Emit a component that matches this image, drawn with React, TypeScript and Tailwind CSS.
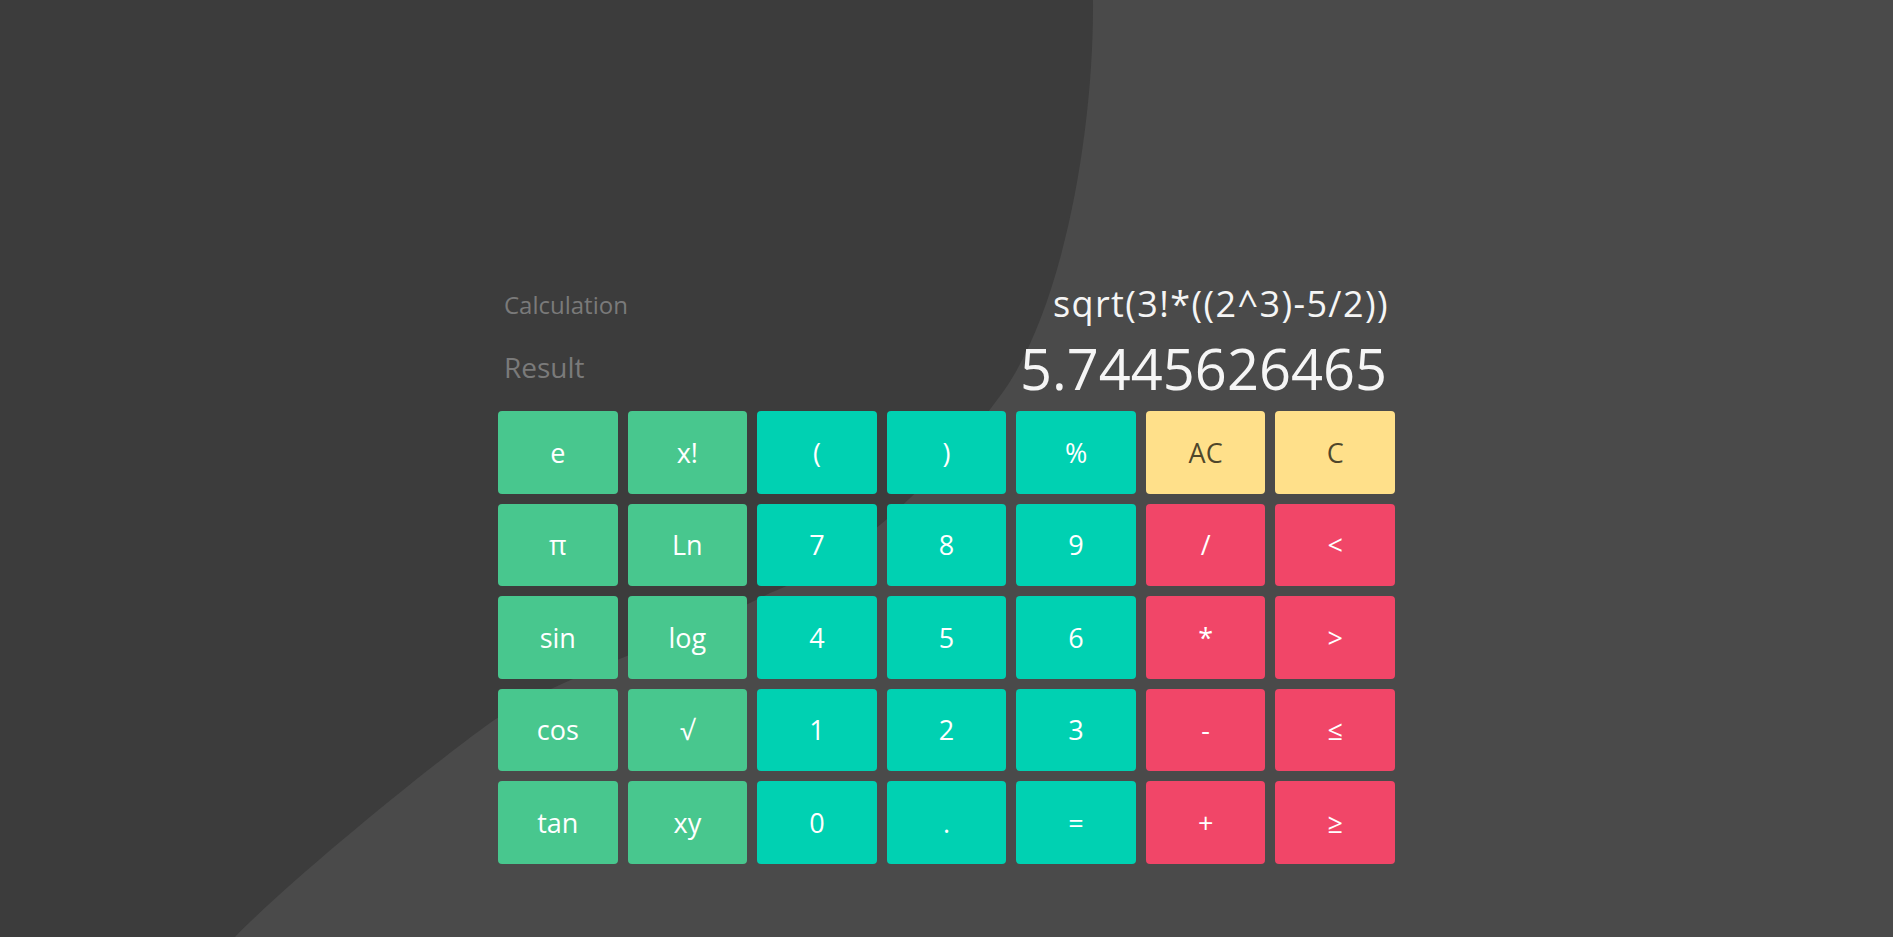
import React from "react";

type Kind = "fn" | "num" | "warn" | "op";

const rows: [string, Kind][][] = [
  [["e", "fn"], ["x!", "fn"], ["(", "num"], [")", "num"], ["%", "num"], ["AC", "warn"], ["C", "warn"]],
  [["π", "fn"], ["Ln", "fn"], ["7", "num"], ["8", "num"], ["9", "num"], ["/", "op"], ["<", "op"]],
  [["sin", "fn"], ["log", "fn"], ["4", "num"], ["5", "num"], ["6", "num"], ["*", "op"], [">", "op"]],
  [["cos", "fn"], ["√", "fn"], ["1", "num"], ["2", "num"], ["3", "num"], ["-", "op"], ["≤", "op"]],
  [["tan", "fn"], ["xy", "fn"], ["0", "num"], [".", "num"], ["=", "num"], ["+", "op"], ["≥", "op"]],
];

const kindClass: Record<Kind, string> = {
  fn: "bg-[#48c78e] text-white",
  num: "bg-[#00d1b2] text-white",
  warn: "bg-[#ffe08a] text-black/70",
  op: "bg-[#f14668] text-white",
};

export default function App() {
  return (
    <div className="relative h-[937px] w-full overflow-hidden bg-[#4a4a4a] font-['Open_Sans','Noto_Sans',sans-serif]">
      <svg
        className="absolute inset-0"
        width="1893"
        height="937"
        viewBox="0 0 1893 937"
        aria-hidden="true"
      >
        <path
          d="M0,0 L1093,0 C1094,140 1060,320 997,400 C965,445 870,555 770,593 C680,640 550,680 490,723 C430,766 290,880 235,937 L0,937 Z"
          fill="#3c3c3c"
        />
      </svg>

      <div className="relative mx-auto w-[897px] pt-[286px]">
        <div className="flex h-[36px] items-start justify-between">
          <span className="mt-[7px] pl-[6px] text-[24px] leading-none text-[#7a7a7a]">Calculation</span>
          <span className="pr-[6px] text-[36px] leading-none tracking-[1.4px] text-[#f5f5f5]">sqrt(3!*((2^3)-5/2))</span>
        </div>
        <div className="mt-[18px] flex h-[56px] items-start justify-between">
          <span className="mt-[13px] pl-[6px] text-[28px] leading-none text-[#7a7a7a]">Result</span>
          <span className="pr-[8px] text-[56px] leading-none text-[#f5f5f5]">5.7445626465</span>
        </div>

        <div className="mt-[15px] grid grid-cols-7 gap-[10px]">
          {rows.flat().map(([label, kind], i) => (
            <button
              key={i}
              className={`flex h-[82.5px] items-center justify-center rounded-[4px] text-[27px] leading-none ${kindClass[kind]}`}
            >
              {label}
            </button>
          ))}
        </div>
      </div>
    </div>
  );
}
